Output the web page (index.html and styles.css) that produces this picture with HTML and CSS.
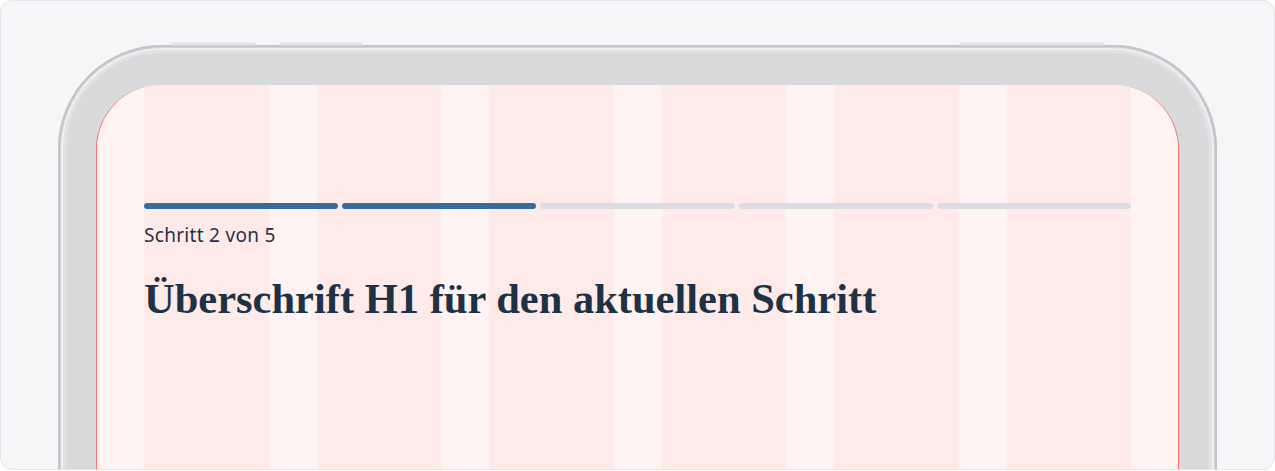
FILE: index.html
```html
<!DOCTYPE html>
<html lang="de">
<head>
<meta charset="utf-8">
<title>Schritt 2 von 5</title>
<link rel="stylesheet" href="styles.css">
</head>
<body>
<div class="card">
  <div class="device">
    <span class="btn btn-a"></span>
    <span class="btn btn-b"></span>
    <span class="btn btn-c"></span>
    <div class="screen">
      <div class="grid-overlay">
        <span></span><span></span><span></span><span></span><span></span><span></span>
      </div>
      <div class="content">
        <div class="progress">
          <span class="seg done"></span>
          <span class="seg done"></span>
          <span class="seg"></span>
          <span class="seg"></span>
          <span class="seg"></span>
        </div>
        <p class="step">Schritt 2 von 5</p>
        <h1 class="title">Überschrift H1 für den aktuellen Schritt</h1>
      </div>
    </div>
  </div>
</div>
</body>
</html>
```
FILE: styles.css
```css
html, body {
  margin: 0;
  padding: 0;
  background: #ffffff;
}
.card {
  width: 1275px;
  height: 470px;
  box-sizing: border-box;
  border: 1px solid #e3e5e9;
  border-radius: 12px;
  background: #f5f6f8;
  overflow: hidden;
  padding: 44px 0 0 57px;
}
.device {
  position: relative;
  width: 1159px;
  height: 520px;
  box-sizing: border-box;
  border-radius: 104px 104px 0 0;
  background: #d9dadc;
  padding: 40px 38px 0 38px;
  box-shadow:
    inset 0 0 0 2px #c3c4c7,
    inset 0 0 0 3px #d2d3d5,
    inset 0 0 0 5px #eeeff0,
    inset 0 0 0 8px #e1e2e4;
}
.btn {
  position: absolute;
  top: -3px;
  height: 4px;
  border-radius: 3px 3px 0 0;
  background: linear-gradient(#eeeff0, #d4d5d7);
}
.btn-a { left: 113px; width: 85px; }
.btn-b { left: 221px; width: 84px; }
.btn-c { left: 901px; width: 146px; }
.screen {
  position: relative;
  height: 100%;
  box-sizing: border-box;
  border-left: 1px solid #f27474;
  border-right: 1px solid #f27474;
  border-radius: 64px 64px 0 0;
  background: #fff4f3;
  overflow: hidden;
  padding: 0 47px;
}
.grid-overlay {
  position: absolute;
  top: 0;
  bottom: 0;
  left: 47px;
  right: 47px;
  display: grid;
  grid-template-columns: repeat(6, 1fr);
  column-gap: 48px;
}
.grid-overlay span {
  background: #ffeaea;
}
.content {
  position: relative;
  padding-top: 118px;
}
.progress {
  display: flex;
  gap: 4px;
}
.seg {
  flex: 1;
  height: 6px;
  border-radius: 3px;
  background: #dcdde2;
}
.seg.done {
  background: #336e9d;
}
.step {
  margin: 13px 0 0 0;
  font-family: "Noto Sans", sans-serif;
  font-size: 19px;
  letter-spacing: 0.3px;
  line-height: 26px;
  color: #1f3347;
}
.title {
  margin: 26px 0 0 0;
  font-family: "Liberation Serif", serif;
  font-weight: 700;
  font-size: 42.5px;
  line-height: 50px;
  color: #1e3246;
}
```
